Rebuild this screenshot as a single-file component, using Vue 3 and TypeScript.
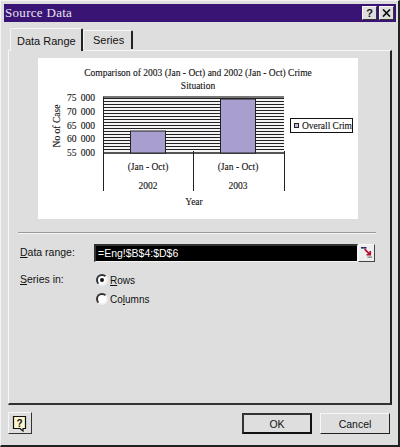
<script setup lang="ts">
const ticks = [
  { label: '75 000', y: 100 },
  { label: '70 000', y: 114 },
  { label: '65 000', y: 128 },
  { label: '60 000', y: 141 },
  { label: '55 000', y: 155 },
]
const hatch = Array.from({ length: 19 }, (_, i) => 97 + i * 3)
</script>

<template>
  <div class="window">
    <div class="titlebar">
      <span class="title">Source Data</span>
      <div class="caption-btns">
        <button class="caption-btn">?</button>
        <button class="caption-btn close">
          <svg width="9" height="8" viewBox="0 0 9 8">
            <path d="M1 0.5 L8 7.5 M8 0.5 L1 7.5" stroke="#111" stroke-width="1.7" fill="none" />
          </svg>
        </button>
      </div>
    </div>

    <div class="body">
      <div class="tabs">
        <div class="tab active">Data Range</div>
        <div class="tab">Series</div>
      </div>

      <div class="panel">
        <div class="chart">
          <svg width="320" height="161" viewBox="38 57 320 161" class="chart-svg">
            <text x="198" y="75" text-anchor="middle" class="t">Comparison of 2003 (Jan - Oct) and 2002 (Jan - Oct) Crime</text>
            <text x="198" y="88" text-anchor="middle" class="t">Situation</text>

            <text transform="translate(60 125) rotate(-90)" text-anchor="middle" class="t">No of Case</text>
            <text v-for="t in ticks" :key="t.label" x="95" :y="t.y" text-anchor="end" class="t tick">{{ t.label }}</text>

            <rect x="103" y="96" width="181" height="56" fill="#f4f4f4" />
            <line v-for="y in hatch" :key="y" x1="103" x2="284" :y1="y + 0.5" :y2="y + 0.5" stroke="#222" />
            <line x1="103" x2="284" y1="96" y2="96" stroke="#777" stroke-width="2" />
            <line x1="103" x2="284" y1="152" y2="152" stroke="#555" stroke-width="2" />

            <rect x="130.5" y="130" width="35" height="22" fill="#a99fcf" stroke="#222" />
            <rect x="220.5" y="98" width="35" height="54" fill="#a99fcf" stroke="#222" />

            <path d="M103.5 96 V190 M193.5 150 V190 M284.5 150 V190" stroke="#222" fill="none" />

            <text x="148" y="169" text-anchor="middle" class="t">(Jan - Oct)</text>
            <text x="238" y="169" text-anchor="middle" class="t">(Jan - Oct)</text>
            <text x="148" y="188" text-anchor="middle" class="t">2002</text>
            <text x="238" y="188" text-anchor="middle" class="t">2003</text>
            <text x="194" y="204" text-anchor="middle" class="t">Year</text>

            <rect x="290.5" y="117.5" width="62" height="14" fill="#fff" stroke="#111" />
            <rect x="294.5" y="122.5" width="4" height="4" fill="#c0b8de" stroke="#222" />
            <text x="302" y="128" class="t" textLength="50">Overall Crim</text>
          </svg>
        </div>

        <div class="divider"></div>

        <div class="row range-row">
          <label class="row-label"><u>D</u>ata range:</label>
          <div class="range-input">
            <span class="range-value">=Eng!$B$4:$D$6</span>
          </div>
          <button class="ref-btn">
            <svg width="14" height="12" viewBox="0 0 14 12">
              <path d="M1 1.5 H7" stroke="#1c1c6a" stroke-width="1.6" />
              <path d="M5 3 L11 9 M11 5 V9 H7" stroke="#b01030" stroke-width="1.8" fill="none" />
              <path d="M8 11.5 H13" stroke="#555" />
            </svg>
          </button>
        </div>

        <div class="row series-row">
          <label class="row-label series-label"><u>S</u>eries in:</label>
          <div class="radios">
            <div class="radio-line">
              <span class="radio checked"></span>
              <span class="radio-text"><u>R</u>ows</span>
            </div>
            <div class="radio-line">
              <span class="radio"></span>
              <span class="radio-text">Co<u>l</u>umns</span>
            </div>
          </div>
        </div>
      </div>

      <div class="footer">
        <button class="help-btn">
          <svg width="16" height="17" viewBox="0 0 16 17">
            <path d="M1.5 1.5 H13.5 V13.5 H11 V16 L8 13.5 H1.5 Z" fill="#fdf6cf" stroke="#111" stroke-width="1.2" />
            <text x="7.5" y="11.5" text-anchor="middle" class="help-q">?</text>
          </svg>
        </button>
        <div class="actions">
          <button class="btn default">OK</button>
          <button class="btn">Cancel</button>
        </div>
      </div>
    </div>
  </div>
</template>

<style>
html,
body {
  margin: 0;
  background: #dedede;
}
</style>

<style scoped>
.window {
  box-sizing: border-box;
  width: 400px;
  height: 447px;
  padding: 3px 2px 2px 3px;
  background: #dedede;
  border-top: 1px solid #f4f4f4;
  border-left: 1px solid #f4f4f4;
  border-right: 2px solid #222;
  border-bottom: 2px solid #222;
  font-family: "Liberation Sans", Arial, sans-serif;
  font-size: 10.5px;
  color: #111;
  display: flex;
  flex-direction: column;
}

.titlebar {
  height: 18px;
  flex-shrink: 0;
  background: #3a1474;
  display: flex;
  align-items: center;
  justify-content: space-between;
  padding: 0 2px 0 1px;
}
.title {
  color: #e8e4f0;
  font-family: "Liberation Serif", serif;
  font-size: 13px;
  letter-spacing: 0.3px;
}
.caption-btns {
  display: flex;
  gap: 2px;
}
.caption-btn {
  width: 15px;
  height: 14px;
  padding: 0;
  background: #dedede;
  border: 1px solid;
  border-color: #f6f6f6 #333 #333 #f6f6f6;
  font: bold 11px "Liberation Sans", sans-serif;
  color: #111;
  display: flex;
  align-items: center;
  justify-content: center;
}

.body {
  flex: 1;
  display: flex;
  flex-direction: column;
  padding: 7px 5px 0 4px;
  min-height: 0;
}

.tabs {
  display: flex;
  align-items: flex-end;
  height: 21px;
  padding-left: 2px;
  position: relative;
  z-index: 1;
}
.tab {
  box-sizing: border-box;
  height: 19px;
  padding: 3px 0 0 9px;
  font-size: 11px;
  white-space: nowrap;
  background: #dedede;
  border-top: 1px solid #f6f6f6;
  border-left: 1px solid #f6f6f6;
  border-right: 2px solid #222;
  border-top-left-radius: 2px;
  border-top-right-radius: 2px;
  margin-bottom: 1px;
}
.tab.active {
  width: 73px;
  height: 23px;
  padding-top: 6px;
  padding-left: 6px;
  margin-bottom: -1px;
}
.tab:not(.active) {
  width: 50px;
}

.panel {
  box-sizing: border-box;
  height: 355px;
  width: 384px;
  border-top: 1px solid #f6f6f6;
  border-left: 1px solid #f6f6f6;
  border-right: 2px solid #222;
  border-bottom: 2px solid #333;
  padding: 7px 14px 0 9px;
  display: flex;
  flex-direction: column;
}

.chart {
  width: 320px;
  height: 161px;
  margin-left: 20px;
  background: #fff;
  flex-shrink: 0;
}
.chart-svg {
  display: block;
}
.t {
  font-family: "Liberation Serif", serif;
  font-size: 9.5px;
  fill: #111;
  stroke: #111;
  stroke-width: 0.1px;
}
.tick {
  word-spacing: 2px;
}

.divider {
  height: 0;
  margin-top: 13px;
  border-top: 1px solid #999;
  border-bottom: 1px solid #f6f6f6;
}

.row {
  display: flex;
}
.range-row {
  align-items: center;
  margin-top: 10px;
}
.row-label {
  box-sizing: border-box;
  width: 76px;
  padding: 0 0 2px 2px;
  flex-shrink: 0;
}
.range-input {
  box-sizing: border-box;
  width: 264px;
  height: 18px;
  background: #000;
  border: 1px solid;
  border-color: #333 #f6f6f6 #f6f6f6 #333;
  border-top-width: 2px;
  border-left-width: 2px;
  color: #fff;
  font-size: 10.5px;
  line-height: 14px;
  white-space: nowrap;
}
.range-value {
  padding-left: 2px;
}
.ref-btn {
  box-sizing: border-box;
  width: 17px;
  height: 18px;
  padding: 1px;
  background: #eee;
  border: 1px solid;
  border-color: #f6f6f6 #444 #444 #f6f6f6;
  display: flex;
  align-items: flex-start;
  justify-content: center;
}

.series-row {
  margin-top: 11px;
}
.series-label {
  padding-top: 0;
}
.radios {
  display: flex;
  flex-direction: column;
  gap: 6px;
}
.radio-line {
  display: flex;
  align-items: center;
  gap: 2px;
  height: 13px;
  font-size: 10px;
}
.radio-text {
  padding-top: 2px;
}
.radio {
  box-sizing: border-box;
  width: 12px;
  height: 12px;
  border-radius: 50%;
  background: #fff;
  border: 2px solid;
  border-color: #333 #f0f0f0 #f0f0f0 #333;
  position: relative;
  margin-left: 2px;
}
.radio.checked::after {
  content: "";
  position: absolute;
  left: 2px;
  top: 2px;
  width: 4px;
  height: 4px;
  border-radius: 50%;
  background: #111;
}

.footer {
  display: flex;
  justify-content: space-between;
  align-items: flex-start;
  padding-top: 7px;
  width: 382px;
}
.help-btn {
  box-sizing: border-box;
  width: 24px;
  height: 22px;
  padding: 0;
  background: #dedede;
  border: 1px solid;
  border-color: #f6f6f6 #333 #333 #f6f6f6;
  display: flex;
  align-items: center;
  justify-content: center;
}
.help-q {
  font: bold 10px "Liberation Sans", sans-serif;
  fill: #111;
}
.actions {
  display: flex;
  gap: 8px;
  padding-top: 1px;
}
.btn {
  box-sizing: border-box;
  width: 70px;
  height: 21px;
  padding: 0;
  background: #dedede;
  border: 1px solid;
  border-color: #f6f6f6 #222 #222 #f6f6f6;
  font: 10.5px "Liberation Sans", sans-serif;
  color: #111;
}
.btn.default {
  border: 2px solid #222;
  border-color: #333 #111 #111 #333;
}
</style>
